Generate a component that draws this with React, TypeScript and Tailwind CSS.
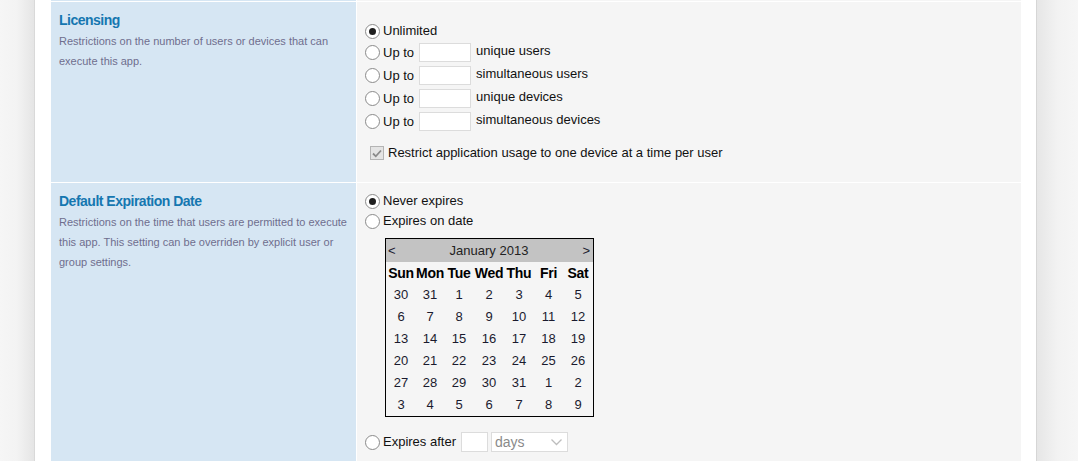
import React from "react";

const font = { fontFamily: '"Liberation Sans", Arial, sans-serif' };

function Radio({ checked = false }: { checked?: boolean }) {
  return (
    <span className="w-[15px] h-[15px] shrink-0 rounded-full border border-[#8a8a8a] bg-white flex items-center justify-center">
      {checked && <span className="w-[7px] h-[7px] rounded-full bg-[#1e1e1e]" />}
    </span>
  );
}

function TextBox({ w = "w-[52px]" }: { w?: string }) {
  return <span className={`${w} h-[19px] shrink-0 bg-white border border-[#dcdcdc] block`} />;
}

function LimitRow({ label }: { label: string }) {
  return (
    <div className="flex items-center h-[23px]">
      <Radio />
      <span className="ml-[3px]">Up to</span>
      <span className="ml-[5px]">
        <TextBox />
      </span>
      <span className="ml-[5px] mb-[4px]">{label}</span>
    </div>
  );
}

const weeks = [
  [30, 31, 1, 2, 3, 4, 5],
  [6, 7, 8, 9, 10, 11, 12],
  [13, 14, 15, 16, 17, 18, 19],
  [20, 21, 22, 23, 24, 25, 26],
  [27, 28, 29, 30, 31, 1, 2],
  [3, 4, 5, 6, 7, 8, 9],
];
const days = ["Sun", "Mon", "Tue", "Wed", "Thu", "Fri", "Sat"];
const cols = ["w-[30px]", "w-[28px]", "w-[30px]", "w-[30px]", "w-[30px]", "w-[29px]", "w-[30px]"];

function Calendar() {
  return (
    <div className="w-[209px] border border-black text-[13px] text-[#1a1a2e]">
      <div className="h-[23px] bg-[#c3c3c3] flex items-center justify-between px-[2px]">
        <span>&lt;</span>
        <span className="text-[#222]">January 2013</span>
        <span className="pr-[1px]">&gt;</span>
      </div>
      <div className="flex h-[22px] items-center font-bold text-black text-[14px] tracking-[-0.3px]">
        {days.map((d, i) => (
          <span key={d} className={`${cols[i]} text-center whitespace-nowrap`}>
            {d}
          </span>
        ))}
      </div>
      {weeks.map((wk, r) => (
        <div key={r} className="flex h-[22px] items-center">
          {wk.map((n, i) => (
            <span key={i} className={`${cols[i]} text-center`}>
              {n}
            </span>
          ))}
        </div>
      ))}
    </div>
  );
}

function Label({ title, children }: { title: string; children: React.ReactNode }) {
  return (
    <div className="h-full bg-[#d6e6f3] pl-[8px] pr-[4px] pt-[9px]">
      <div className="text-[14px] leading-[18px] font-bold tracking-[-0.5px] text-[#1577b0]">{title}</div>
      <p className="mt-[2px] text-[11px] leading-[20px] text-[#6f6e8e]">{children}</p>
    </div>
  );
}

export default function App() {
  return (
    <div className="w-[1078px] h-[461px] overflow-hidden flex bg-white text-[13px] text-[#111]" style={font}>
      <div className="w-[35px] shrink-0 bg-linear-to-r from-[#f6f6f6] via-[#f3f3f3] to-[#e5e5e5] border-r border-[#d9d9d9]" />
      <div className="flex-1 pl-[16px] pr-[15px]">
        <div className="grid grid-cols-[305px_664px] gap-x-px gap-y-px">
          <div className="h-px bg-[#d6e6f3]" />
          <div className="h-px bg-[#f5f5f5]" />

          <div className="h-[180px]">
            <Label title="Licensing">Restrictions on the number of users or devices that can execute this app.</Label>
          </div>
          <div className="h-[180px] bg-[#f5f5f5] pl-[8px] pt-[19px]">
            <div className="flex items-center h-[20px]">
              <Radio checked />
              <span className="ml-[3px]">Unlimited</span>
            </div>
            <LimitRow label="unique users" />
            <LimitRow label="simultaneous users" />
            <LimitRow label="unique devices" />
            <LimitRow label="simultaneous devices" />
            <div className="flex items-center h-[20px] mt-[10px] pl-[5px]">
              <span className="w-[14px] h-[14px] border border-[#b4b4b4] bg-[#e4e4e4] flex items-center justify-center">
                <svg width="10" height="9" viewBox="0 0 10 9">
                  <path d="M1 4.5 L3.8 7.3 L9 1.5" fill="none" stroke="#8a8a8a" strokeWidth="1.8" />
                </svg>
              </span>
              <span className="ml-[4px]">Restrict application usage to one device at a time per user</span>
            </div>
          </div>

          <div className="h-[300px]">
            <Label title="Default Expiration Date">
              Restrictions on the time that users are permitted to execute this app. This setting can be overriden by
              explicit user or group settings.
            </Label>
          </div>
          <div className="h-[300px] bg-[#f5f5f5] pl-[8px] pt-[8px]">
            <div className="flex items-center h-[20px]">
              <Radio checked />
              <span className="ml-[3px]">Never expires</span>
            </div>
            <div className="flex items-center h-[20px]">
              <Radio />
              <span className="ml-[3px]">Expires on date</span>
            </div>
            <div className="ml-[20px] mt-[7px]">
              <Calendar />
            </div>
            <div className="flex items-center h-[20px] mt-[15px]">
              <Radio />
              <span className="ml-[3px]">Expires after</span>
              <span className="ml-[5px] w-[27px] h-[20px] bg-white border border-[#dcdcdc] block" />
              <span className="ml-[3px] w-[77px] h-[20px] bg-white border border-[#dcdcdc] flex items-center justify-between pl-[3px] pr-[5px]">
                <span className="text-[14px] text-[#8a8a8a]">days</span>
                <svg width="11" height="7" viewBox="0 0 11 7">
                  <path d="M0.5 0.5 L5.5 5.5 L10.5 0.5" fill="none" stroke="#bdbdbd" strokeWidth="1.3" />
                </svg>
              </span>
            </div>
          </div>
        </div>
      </div>
      <div className="w-[42px] shrink-0 bg-linear-to-r from-[#e6e6e6] via-[#f2f2f2] to-[#f6f6f6] border-l border-[#d6d6d6]" />
    </div>
  );
}
